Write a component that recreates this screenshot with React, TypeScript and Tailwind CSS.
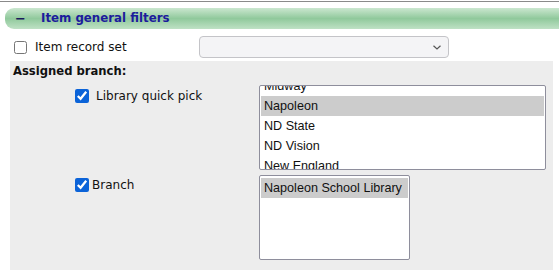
import React from 'react'

const branches = ['Midway', 'Napoleon', 'ND State', 'ND Vision', 'New England']

function ListBox({
    items,
    selected,
    width,
    offset
} : {
    items: string[];
    selected: string;
    width: string;
    offset: string;
}) {
    return (
        <div className={`${width} h-[85px] border border-[#8e8e9c] rounded-[2px] bg-white overflow-hidden p-[1px]`}>
            <div className={offset}>
                {items.map((item) => (
                    <div
                        key={item}
                        className={`h-[20px] leading-[20px] pl-[3px] whitespace-nowrap font-['Liberation_Sans',sans-serif] text-[12.6px] text-[#111] ${item === selected ? 'bg-[#cccccc]' : ''}`}
                    >
                        {item}
                    </div>
                ))}
            </div>
        </div>
    )
}

export default function App() {
    return (
        <div className="w-[559px] h-[270px] bg-white overflow-hidden font-['DejaVu_Sans',sans-serif] text-[12px] text-[#111]">
            <div className="mt-[1px] h-[1px] bg-[#8a8a8a]" />

            {/* section header */}
            <div className="mt-[6px] ml-[5px] h-[21px] rounded-l-[9px] bg-gradient-to-b from-[#cbe7d0] via-[#90c99c] to-[#bfe1c5] flex items-center">
                <span className="ml-[10px] w-[26px] text-[13px] font-bold text-[#1a1a5a] leading-none">−</span>
                <span className="font-bold text-[#1c1c9c] text-[11.8px] pt-[1px]">Item general filters</span>
            </div>

            {/* record set row */}
            <div className="mt-[7px] h-[22px] flex items-center">
                <input type="checkbox" className="m-0 ml-[14px] w-[13px] h-[13px]" />
                <span className="ml-[8px] w-[164px]">Item record set</span>
                <div className="w-[250px] h-[22px] border border-[#c4c4c8] rounded-[4px] bg-[#f4f4f6] flex items-center justify-end pr-[7px]">
                    <svg width="8" height="5" viewBox="0 0 8 5" fill="none" stroke="#555" strokeWidth="1.2">
                        <path d="M0.5 0.8 L4 4 L7.5 0.8" />
                    </svg>
                </div>
            </div>

            {/* assigned branch panel */}
            <div className="mt-[3px] ml-[10px] w-[543px] h-[209px] bg-[#ededed] pt-[3px] pl-[3px]">
                <p className="font-bold text-[11.6px] leading-[15px]">Assigned branch:</p>
                <div className="mt-[6px] flex">
                    <div className="w-[246px] pl-[62px] pt-[4px] flex items-start">
                        <input type="checkbox" defaultChecked className="m-0 w-[14px] h-[14px] accent-[#0b63d8]" />
                        <span className="ml-[7px] leading-[14px]">Library quick pick</span>
                    </div>
                    <ListBox items={branches} selected="Napoleon" width="w-[287px]" offset="-mt-[11px]" />
                </div>
                <div className="mt-[5px] flex">
                    <div className="w-[246px] pl-[62px] pt-[3px] flex items-start">
                        <input type="checkbox" defaultChecked className="m-0 w-[14px] h-[14px] accent-[#0b63d8]" />
                        <span className="ml-[3px] leading-[14px]">Branch</span>
                    </div>
                    <ListBox items={['Napoleon School Library']} selected="Napoleon School Library" width="w-[151px]" offset="mt-[1px]" />
                </div>
            </div>
        </div>
    )
}
